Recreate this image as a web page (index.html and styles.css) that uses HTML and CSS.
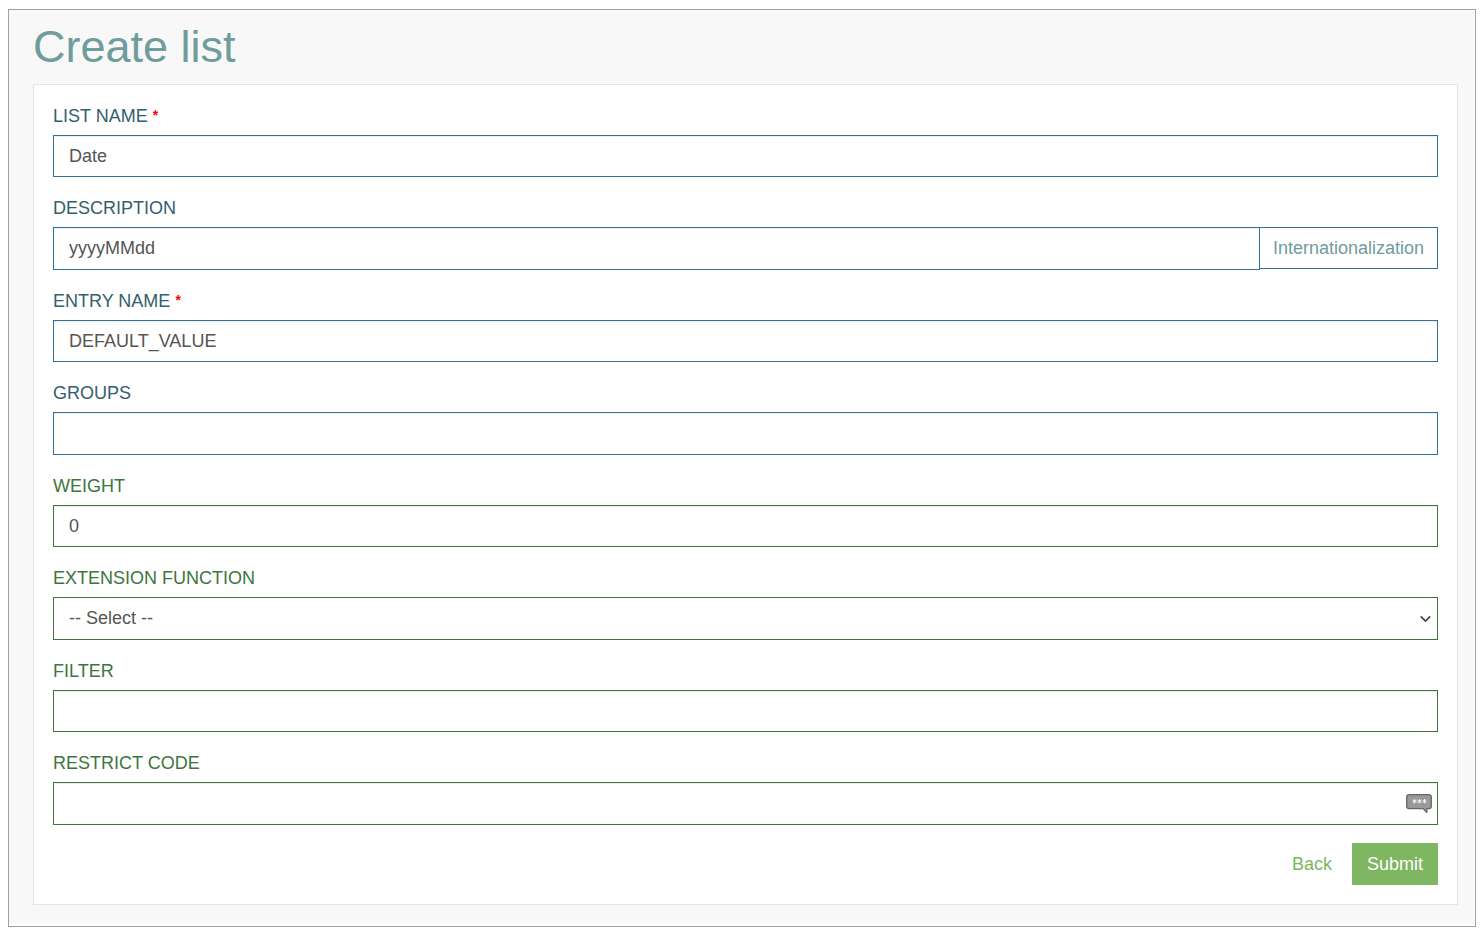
FILE: index.html
```html
<!DOCTYPE html>
<html lang="en">
<head>
<meta charset="utf-8">
<title>Create list</title>
<link rel="stylesheet" href="styles.css">
</head>
<body>
<main class="frame">
  <div class="panel">
    <h1 class="title">Create list</h1>
    <form class="card">
      <div class="field">
        <label class="label" for="list-name">LIST NAME <span class="required">*</span></label>
        <input class="control" id="list-name" type="text" value="Date" required>
      </div>
      <div class="field">
        <label class="label" for="description">DESCRIPTION</label>
        <div class="group">
          <input class="control" id="description" type="text" value="yyyyMMdd">
          <button class="addon" type="button">Internationalization</button>
        </div>
      </div>
      <div class="field">
        <label class="label" for="entry-name">ENTRY NAME <span class="required">*</span></label>
        <input class="control" id="entry-name" type="text" value="DEFAULT_VALUE" required>
      </div>
      <div class="field">
        <label class="label" for="groups">GROUPS</label>
        <input class="control" id="groups" type="text">
      </div>
      <div class="field field-green">
        <label class="label" for="weight">WEIGHT</label>
        <input class="control" id="weight" type="text" value="0">
      </div>
      <div class="field field-green">
        <label class="label" for="extension">EXTENSION FUNCTION</label>
        <div class="wrap">
          <select class="control select" id="extension"><option>-- Select --</option></select>
          <svg class="chevron" viewBox="0 0 12 8" aria-hidden="true"><path d="M.8 1.300 5.500 6l4.700-4.700" fill="none" stroke="#444" stroke-width="1.700"/></svg>
        </div>
      </div>
      <div class="field field-green">
        <label class="label" for="filter">FILTER</label>
        <input class="control" id="filter" type="text">
      </div>
      <div class="field field-green">
        <label class="label" for="restrict">RESTRICT CODE</label>
        <div class="wrap">
          <input class="control" id="restrict" type="text">
          <svg class="bubble" viewBox="0 0 26 19" aria-hidden="true">
            <path d="M3 .7h20q2.300 0 2.300 2.300v9.300q0 2.300-2.300 2.300h-2.200v3.700l-3.700-3.700H3Q.7 14.600.7 12.300V3Q.7.7 3 .7z" fill="#999" stroke="#666" stroke-width="1.300"/>
            <g stroke="#f4f4f4" stroke-width="1">
              <path d="M8.500 5v4.400M6.500 6.200l4 2.200M10.500 6.200l-4 2.200"/>
              <path d="M13.500 5v4.400M11.500 6.200l4 2.200M15.500 6.200l-4 2.200"/>
              <path d="M18.500 5v4.400M16.500 6.200l4 2.200M20.500 6.200l-4 2.200"/>
            </g>
          </svg>
        </div>
      </div>
      <div class="actions">
        <a class="back" href="#">Back</a>
        <button class="submit" type="submit">Submit</button>
      </div>
    </form>
  </div>
</main>
</body>
</html>
```
FILE: styles.css
```css
* {
  box-sizing: border-box;
}

body {
  margin: 9px 5px 7px 8px;
  background: #fff;
  font: 18px/25px "Liberation Sans", Arial, sans-serif;
}

.frame {
  padding: 0 1px 2px 0;
  border: 1px solid #a0a0a0;
}

.panel {
  padding: 12px 16px 19px 24px;
  background: #f8f8f8;
}

.title {
  margin: 0 0 12px;
  color: #6f9c9c;
  font-size: 45px;
  font-weight: 400;
  line-height: 50px;
}

.card {
  display: flex;
  flex-direction: column;
  gap: 18px;
  padding: 18px 19px 19px;
  border: 1px solid #e4e4e4;
  background: #fff;
}

.field {
  --line: #31709f;
  display: flex;
  flex-direction: column;
  gap: 5px;
  color: #33606c;
}

.field-green {
  --line: #3c763d;
  color: #3c763d;
}

.label {
  line-height: 27px;
}

.required {
  color: #f00;
  font-size: 14px;
  font-weight: 700;
  line-height: 14px;
  vertical-align: 2px;
}

.control {
  display: block;
  width: 100%;
  height: 42px;
  padding: 7px 15px 6px;
  border: 1px solid var(--line);
  border-radius: 0;
  background: #fff;
  box-shadow: inset 0 1px 1px rgba(0, 0, 0, .075);
  color: #555;
  font: inherit;
}

.field:nth-child(even) .control {
  height: 43px;
  padding: 6px 15px 7px;
}

.select {
  appearance: none;
  box-shadow: none;
}

.group {
  display: flex;
  align-items: flex-start;
}

.group .control {
  flex: 1;
  min-width: 0;
}

.addon {
  flex: none;
  width: 179px;
  height: 42px;
  margin-left: -1px;
  padding: 1px 0 0;
  border: 1px solid var(--line);
  background: #fff;
  color: #6f9c9c;
  font: inherit;
}

.wrap {
  position: relative;
}

.chevron {
  position: absolute;
  top: 18px;
  right: 6px;
  width: 12px;
  height: 8px;
  pointer-events: none;
}

.bubble {
  position: absolute;
  top: 12px;
  right: 6px;
  width: 26px;
  height: 19px;
}

.actions {
  display: flex;
  justify-content: flex-end;
  align-items: center;
  gap: 20px;
}

.back {
  color: #7eb661;
  text-decoration: none;
}

.submit {
  width: 86px;
  height: 42px;
  padding: 0;
  border: 0;
  background: #7eb661;
  color: #fff;
  font: inherit;
}
```
